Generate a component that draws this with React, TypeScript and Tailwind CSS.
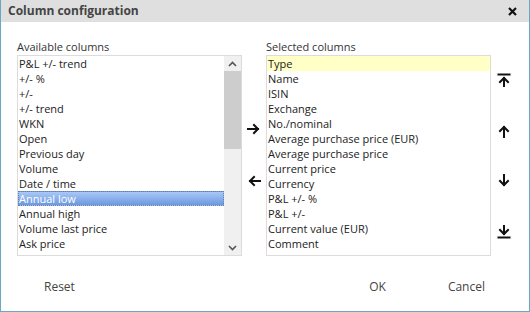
import type { ReactNode } from 'react'

const available = [
  'P&L +/- trend',
  '+/- %',
  '+/-',
  '+/- trend',
  'WKN',
  'Open',
  'Previous day',
  'Volume',
  'Date / time',
  'Annual low',
  'Annual high',
  'Volume last price',
  'Ask price',
]

const selected = [
  'Type',
  'Name',
  'ISIN',
  'Exchange',
  'No./nominal',
  'Average purchase price (EUR)',
  'Average purchase price',
  'Current price',
  'Currency',
  'P&L +/- %',
  'P&L +/-',
  'Current value (EUR)',
  'Comment',
]

function Arrow({ dir, bar }: { dir: 'up' | 'down' | 'left' | 'right'; bar?: boolean }) {
  const rot = { up: 0, right: 90, down: 180, left: 270 }[dir]
  return (
    <svg width="14" height="14" viewBox="0 0 14 14" className="block">
      <g transform={`rotate(${rot} 7 7)`} fill="none" stroke="#111" strokeWidth="2" strokeLinecap="square">
        {bar ? <path d="M1.5 1.5h11" /> : null}
        <path d={bar ? 'M7 5v8.5' : 'M7 3v10'} />
        <path d={bar ? 'M3 9l4-4 4 4' : 'M3 7l4-4 4 4'} />
      </g>
    </svg>
  )
}

function ListBox({ children }: { children: ReactNode }) {
  return <div className="h-[201px] border border-[#dcdcdc] bg-white">{children}</div>
}

export default function App() {
  return (
    <div
      className="flex h-[312px] w-[530px] flex-col border-x border-b border-[#6aa8c0] bg-white text-[#333]"
      style={{ fontFamily: '"Open Sans", sans-serif' }}
    >
      <div className="flex h-[22px] shrink-0 items-center justify-between bg-[#dfdfdf] pl-[7px] pr-[12px]">
        <span className="text-[12px] font-bold text-[#444]">Column configuration</span>
        <svg width="9" height="9" viewBox="0 0 9 9">
          <path d="M1 1l7 7M8 1l-7 7" stroke="#111" strokeWidth="2.2" />
        </svg>
      </div>

      <div className="flex pl-[16px] pt-[16px]">
        <div className="w-[225px]">
          <div className="h-[17px] text-[11px] leading-[17px]">Available columns</div>
          <ListBox>
            <div className="flex h-full">
              <div className="flex-1">
                {available.map((item) => (
                  <div
                    key={item}
                    className={
                      item === 'Annual low'
                        ? 'h-[15px] border border-dotted border-[#6a7fa8] bg-gradient-to-b from-[#a8c8f8] to-[#6e98de] text-[11px] leading-[13px] text-white'
                        : 'h-[15px] pl-[1px] text-[11px] leading-[15px] text-[#222]'
                    }
                  >
                    {item}
                  </div>
                ))}
              </div>
              <div className="flex w-[17px] flex-col bg-[#f0f0f0]">
                <div className="flex h-[15px] items-center justify-center">
                  <svg width="9" height="6" viewBox="0 0 9 6">
                    <path d="M1 5l3.5-3.5L8 5" fill="none" stroke="#555" strokeWidth="1.6" />
                  </svg>
                </div>
                <div className="h-[78px] bg-[#cdcdcd]" />
                <div className="flex-1" />
                <div className="flex h-[15px] items-center justify-center">
                  <svg width="9" height="6" viewBox="0 0 9 6">
                    <path d="M1 1l3.5 3.5L8 1" fill="none" stroke="#555" strokeWidth="1.6" />
                  </svg>
                </div>
              </div>
            </div>
          </ListBox>
        </div>

        <div className="flex w-[24px] flex-col items-center pt-[84px]">
          <Arrow dir="right" />
          <div className="h-[38px]" />
          <Arrow dir="left" />
        </div>

        <div className="w-[225px]">
          <div className="h-[17px] text-[11px] leading-[17px]">Selected columns</div>
          <ListBox>
            {selected.map((item) => (
              <div
                key={item}
                className={
                  item === 'Type'
                    ? 'h-[15px] bg-[#ffffc6] pl-[1px] text-[11px] leading-[15px] text-[#222]'
                    : 'h-[15px] pl-[1px] text-[11px] leading-[15px] text-[#222]'
                }
              >
                {item}
              </div>
            ))}
          </ListBox>
        </div>

        <div className="flex w-[26px] flex-col items-center pt-[35px]">
          <Arrow dir="up" bar />
          <div className="h-[37px]" />
          <Arrow dir="up" />
          <div className="h-[36px]" />
          <Arrow dir="down" />
          <div className="h-[37px]" />
          <Arrow dir="down" bar />
        </div>
      </div>

      <div className="flex flex-1 items-center pt-[6px] text-[12px] text-[#444]">
        <button className="ml-[43px]">Reset</button>
        <button className="ml-auto">OK</button>
        <button className="ml-[62px] mr-[44px]">Cancel</button>
      </div>
    </div>
  )
}
